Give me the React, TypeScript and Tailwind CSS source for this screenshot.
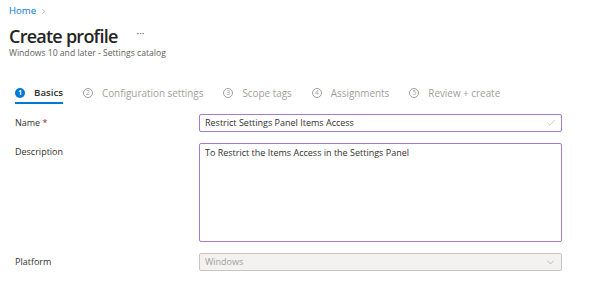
import React from 'react';
import { ChevronRight, Check, ChevronDown } from 'lucide-react';

const steps = [
    { n: 1, name: 'Basics', active: true },
    { n: 2, name: 'Configuration settings' },
    { n: 3, name: 'Scope tags' },
    { n: 4, name: 'Assignments' },
    { n: 5, name: 'Review + create' },
];

export default function App() {
    return (
        <div className="w-[602px] h-[295px] bg-white overflow-hidden text-[#323130]" style={{ fontFamily: '"Open Sans", sans-serif' }}>
            <div className="pl-[9px] pt-[3px]">
                <div className="flex items-center gap-[3px] text-[9.6px] text-[#0078d4] h-[16px]">
                    <span>Home</span>
                    <ChevronRight className="h-[9px] w-[9px] text-[#8a8886]" strokeWidth={1.5} />
                </div>
                <div className="flex items-center mt-[6px] h-[22px]">
                    <h1 className="text-[18px] font-semibold leading-none tracking-[-0.75px] text-[#242424]">Create profile</h1>
                    <span className="ml-[19px] text-[10px] text-[#605e5c] leading-none -mt-[6px]">···</span>
                </div>
                <div className="text-[8.6px] text-[#605e5c] leading-[12px] mt-[0px]">Windows 10 and later - Settings catalog</div>
            </div>

            {/* Wizard steps */}
            <div className="flex items-center pl-[15px] mt-[24px] h-[20px] gap-[20px]">
                {steps.map((s) => (
                    <div key={s.n} className={`relative flex items-center gap-[9px] h-full ${s.active ? '' : 'text-[#a19f9d]'}`}>
                        <span
                            className={`flex items-center justify-center w-[10px] h-[10px] rounded-full text-[6.5px] leading-none ${s.active ? 'bg-[#0078d4] text-white font-bold' : 'border border-[#a19f9d] text-[#a19f9d]'}`}
                        >
                            {s.n}
                        </span>
                        <span className={`${s.active ? 'text-[9.7px] font-semibold text-[#323130]' : 'text-[9.9px]'}`}>{s.name}</span>
                        {s.active && <span className="absolute left-0 right-0 bottom-[-1px] h-[2px] bg-[#0078d4]" />}
                    </div>
                ))}
            </div>

            {/* Form */}
            <div className="mt-[11px] pl-[15px] flex flex-col">
                <div className="flex items-center h-[18px]">
                    <label className="w-[184px] text-[9px]">Name <span className="text-[#a4262c]">*</span></label>
                    <div className="w-[363px] h-[18px] border border-[#a67bcc] rounded-[2px] flex items-center px-[5px] text-[9px]">
                        <span className="flex-1">Restrict Settings Panel Items Access</span>
                        <Check className="h-[10px] w-[10px] text-[#8cbf6a]" strokeWidth={1.5} />
                    </div>
                </div>
                <div className="flex mt-[11px]">
                    <label className="w-[184px] text-[9px] pt-[2px]">Description</label>
                    <div className="w-[363px] h-[99px] border border-[#a67bcc] rounded-[2px] px-[5px] pt-[2px] text-[9px]">
                        To Restrict the Items Access in the Settings Panel
                    </div>
                </div>
                <div className="flex items-center mt-[11px] h-[18px]">
                    <label className="w-[184px] text-[9px]">Platform</label>
                    <div className="w-[363px] h-[18px] border border-[#c8c6c4] bg-[#f3f2f1] rounded-[2px] flex items-center px-[5px] text-[9px] text-[#a19f9d]">
                        <span className="flex-1">Windows</span>
                        <ChevronDown className="h-[11px] w-[11px] text-[#a19f9d]" strokeWidth={1.5} />
                    </div>
                </div>
            </div>
        </div>
    );
}
